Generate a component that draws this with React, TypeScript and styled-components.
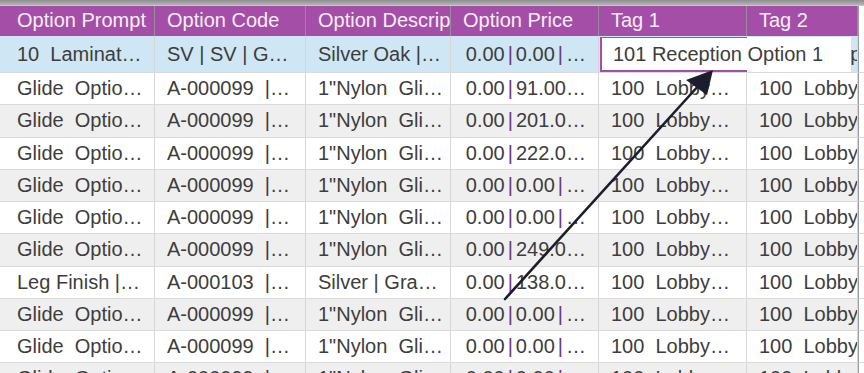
import React from "react";
import styled, { createGlobalStyle } from "styled-components";

const Global = createGlobalStyle`
  html, body { margin: 0; padding: 0; background: #fff; overflow: hidden; }
  body { font-family: "Segoe UI", "Liberation Sans", Arial, sans-serif; }
`;

const COLS = "5px 150px 151px 145px 148px 148px 111px 6px";

const Frame = styled.div`
  position: relative;
  width: 864px;
  height: 373px;
  overflow: hidden;
  background: #fff;
`;

const TopBar = styled.div`
  height: 6px;
  background: linear-gradient(#8f8f8f, #b4b4b4);
  border-bottom: 1px solid #c8c8c8;
  box-sizing: border-box;
`;

const Row = styled.div<{ $h: number }>`
  display: grid;
  grid-template-columns: ${COLS};
  height: ${(p) => p.$h}px;
`;

const HeadCell = styled.div<{ $edge?: boolean }>`
  box-sizing: border-box;
  background: ${(p) => (p.$edge ? "#ffffff" : "#a54ea7")};
  border-right: 1px solid ${(p) => (p.$edge ? "transparent" : "#9a8a9c")};
  border-left: ${(p) => (p.$edge ? "1px solid #9c9c9c" : "none")};
  color: #f6eef8;
  font-size: 20px;
  line-height: 29px;
  padding-left: 12px;
  white-space: pre;
  overflow: hidden;
`;

const Cell = styled.div<{ $bg: string; $align?: "left" | "right"; $edge?: boolean }>`
  box-sizing: border-box;
  background: ${(p) => p.$bg};
  border-right: 1px solid ${(p) => (p.$edge ? "transparent" : "#d6d6d6")};
  border-left: ${(p) => (p.$edge ? "1px solid #9c9c9c" : "none")};
  border-bottom: 1px solid #dadada;
  color: #3d3d3d;
  font-size: 20px;
  display: flex;
  align-items: center;
  justify-content: ${(p) => (p.$align === "right" ? "flex-end" : "flex-start")};
  padding: ${(p) => (p.$align === "right" ? "0 12px 0 0" : "0 0 0 12px")};
  white-space: pre;
  overflow: hidden;
`;

const Pipe = styled.span`
  color: #6e3c7a;
  margin: 0 3px;
`;

const Editor = styled.div`
  position: absolute;
  left: 600px;
  top: 37px;
  width: 251px;
  height: 35px;
  background: #fff;
  box-sizing: border-box;
  font-size: 20px;
  color: #3d3d3d;
  line-height: 34px;
  padding-left: 13px;
  white-space: pre;
  &::before {
    content: "";
    position: absolute;
    left: 0;
    top: 0;
    width: 147px;
    height: 100%;
    box-sizing: border-box;
    border-left: 2px solid #a54ea7;
    border-top: 1px solid #a54ea7;
    border-bottom: 2px solid #a54ea7;
    pointer-events: none;
  }
`;

const Arrow = styled.svg`
  position: absolute;
  left: 0;
  top: 0;
  pointer-events: none;
`;

type RowData = [string, string, string, string, string, string];

const glide = (price: string): RowData => [
  "Glide  Optio…",
  "A-000099  |…",
  "1\"Nylon  Gli…",
  price,
  "100  Lobby…",
  "100  Lobby",
];

const rows: RowData[] = [
  glide("0.00|91.00…"),
  glide("0.00|201.0…"),
  glide("0.00|222.0…"),
  glide("0.00|0.00|…"),
  glide("0.00|0.00|…"),
  glide("0.00|249.0…"),
  ["Leg Finish |…", "A-000103  |…", "Silver | Gra…", "0.00|138.0…", "100  Lobby…", "100  Lobby"],
  glide("0.00|0.00|…"),
  glide("0.00|0.00|…"),
  glide("0.00|0.00|…"),
];

const renderPrice = (s: string) =>
  s.split("|").map((part, i, arr) => (
    <React.Fragment key={i}>
      {part}
      {i < arr.length - 1 && <Pipe>|</Pipe>}
    </React.Fragment>
  ));

export default function App() {
  const sel = "#cfe6f5";
  return (
    <Frame>
      <Global />
      <TopBar />
      <Row $h={30}>
        <HeadCell />
        <HeadCell>Option Prompt</HeadCell>
        <HeadCell>Option Code</HeadCell>
        <HeadCell>Option Description</HeadCell>
        <HeadCell>Option Price</HeadCell>
        <HeadCell>Tag 1</HeadCell>
        <HeadCell>Tag 2</HeadCell>
        <HeadCell $edge />
      </Row>
      <Row $h={37}>
        <Cell $bg={sel} />
        <Cell $bg={sel}>10  Laminat…</Cell>
        <Cell $bg={sel}>SV | SV | G…</Cell>
        <Cell $bg={sel}>Silver Oak |…</Cell>
        <Cell $bg={sel} $align="right">{renderPrice("0.00|0.00|…")}</Cell>
        <Cell $bg={sel} />
        <Cell $bg={sel}>100  Reception…</Cell>
        <Cell $bg="#fff" $edge />
      </Row>
      {rows.map((r, i) => {
        const bg = i % 2 === 0 ? "#ffffff" : "#efefef";
        return (
          <Row key={i} $h={32.25}>
            <Cell $bg={bg} />
            <Cell $bg={bg}>{r[0]}</Cell>
            <Cell $bg={bg}>{r[1]}</Cell>
            <Cell $bg={bg}>{r[2]}</Cell>
            <Cell $bg={bg} $align="right">{renderPrice(r[3])}</Cell>
            <Cell $bg={bg}>{r[4]}</Cell>
            <Cell $bg={bg}>{r[5]}</Cell>
            <Cell $bg="#fff" $edge />
          </Row>
        );
      })}
      <Editor>101 Reception Option 1</Editor>
      <Arrow width="864" height="373" viewBox="0 0 864 373">
        <line x1="505" y1="299" x2="700" y2="84" stroke="#1c1f2b" strokeWidth="2.6" strokeLinecap="round" />
        <polygon points="713,70 707,95 686,80" fill="#1c1f2b" />
      </Arrow>
    </Frame>
  );
}
